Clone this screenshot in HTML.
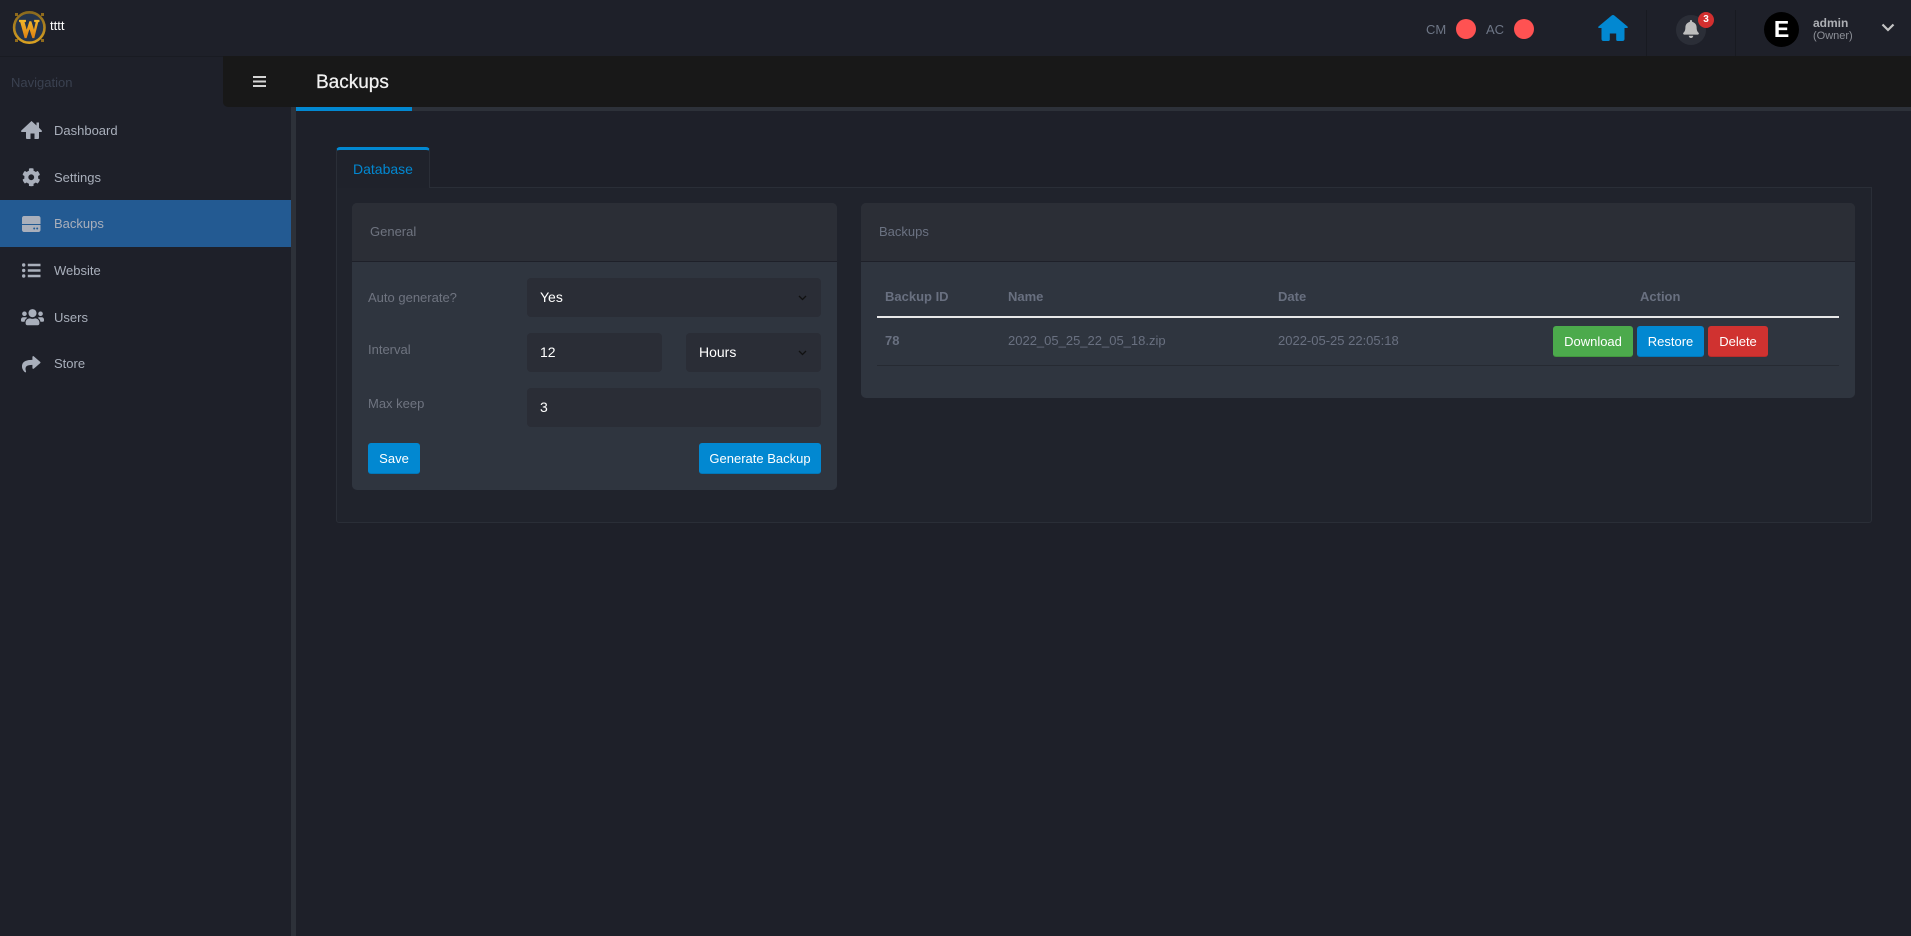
<!DOCTYPE html>
<html lang="en">
<head>
<meta charset="utf-8">
<title>Backups</title>
<style>
html,body{margin:0;padding:0;width:1911px;height:936px;overflow:hidden;background:#1e2029;font-family:"Liberation Sans",Arial,sans-serif;font-size:13px;}
.a{position:absolute;}
.t{position:absolute;white-space:nowrap;line-height:16px;height:16px;}
svg{position:absolute;display:block;}
.nav{color:#a9afbb;left:54px;}
.field{position:absolute;background:#2a2d36;border-radius:4px;height:39px;color:#fff;line-height:39px;font-size:14px;box-sizing:border-box;padding-left:13px;}
.btn{position:absolute;height:31px;line-height:31px;border-radius:3px;color:#fff;text-align:center;font-size:13px;box-sizing:border-box;}
.blue{background:#0288d1;border-bottom:1px solid #0277b8;}
.lab{color:#6f7480;}
.th{color:#697080;font-weight:bold;}
.td{color:#697080;}
</style>
</head>
<body>
<!-- top bar -->
<div class="a" style="left:0;top:0;width:1911px;height:56px;background:#1e2029;"></div>
<div class="a" style="left:0;top:56px;width:223px;height:1px;background:#191b22;"></div>
<!-- logo -->
<svg style="left:11px;top:10px" width="38" height="36" viewBox="0 0 38 36">
<defs>
<linearGradient id="g" x1="0" y1="0" x2="0" y2="1"><stop offset="0" stop-color="#8a6a1e"/><stop offset="1" stop-color="#d9a021"/></linearGradient>
<linearGradient id="w" x1="0" y1="0" x2="0" y2="1"><stop offset="0" stop-color="#f7c32e"/><stop offset="1" stop-color="#d9730d"/></linearGradient>
</defs>
<path d="M4 3h3v3H4zM30 3h3v3h-3zM4 29h3v3H4zM30 29h3v3h-3z" fill="#8f6a1c"/>
<circle cx="18.300" cy="17.500" r="15.200" fill="#24334a" stroke="url(#g)" stroke-width="2.600"/>
<text x="18.300" y="27" text-anchor="middle" font-family="Liberation Serif, serif" font-weight="bold" font-size="25" fill="url(#w)" stroke="url(#w)" stroke-width="1.300" textLength="20" lengthAdjust="spacingAndGlyphs">W</text>
</svg>
<div class="t" style="left:50px;top:18px;color:#fff;font-size:13px;">tttt</div>

<!-- status -->
<div class="t" style="left:1426px;top:22px;font-size:13px;color:#6e7686;">CM</div>
<div class="a" style="left:1456px;top:19px;width:20px;height:20px;border-radius:50%;background:#ff5252;"></div>
<div class="t" style="left:1486px;top:22px;font-size:13px;color:#6e7686;">AC</div>
<div class="a" style="left:1514px;top:19px;width:20px;height:20px;border-radius:50%;background:#ff5252;"></div>
<svg style="left:1598px;top:15px" width="30" height="26" viewBox="0 0 30 26"><path d="M15 0c.5 0 1 .2 1.500.6L29.500 11.500c.6.700.4 1.500-.5 1.500H26.500V24c0 1.200-.8 2-2 2h-5c-.8 0-1.300-.6-1.300-1.400V18.500h-6.400v6.100c0 .8-.5 1.400-1.300 1.400h-5c-1.200 0-2-.8-2-2V13H1c-.9 0-1.100-.8-.5-1.500L13.500 .6c.5-.4 1-.6 1.500-.6z" fill="#0288d1"/></svg>
<div class="a" style="left:1646px;top:10px;width:1px;height:46px;background:#181a21;"></div>
<div class="a" style="left:1735px;top:10px;width:1px;height:46px;background:#181a21;"></div>
<div class="a" style="left:1676px;top:15px;width:30px;height:30px;border-radius:50%;background:#2b2e37;"></div>
<svg style="left:1683px;top:20px" width="16" height="18" viewBox="0 0 448 512"><path fill="#bdbdbd" d="M224 512c35.32 0 63.970-28.650 63.970-64H160.030c0 35.350 28.650 64 63.970 64zm215.390-149.710c-19.320-20.760-55.470-51.990-55.470-154.290 0-77.700-54.480-139.900-127.940-155.160V32c0-17.670-14.320-32-31.980-32s-31.980 14.330-31.980 32v20.840C118.560 68.100 64.080 130.300 64.080 208c0 102.300-36.150 133.530-55.470 154.290-6 6.450-8.660 14.160-8.610 21.710.11 16.400 12.980 32 32.100 32h383.800c19.120 0 32-15.600 32.100-32 .05-7.550-2.610-15.270-8.610-21.710z"/></svg>
<div class="a" style="left:1698px;top:12px;width:16px;height:16px;border-radius:50%;background:#d32f2f;color:#fff;font-size:10px;font-weight:bold;line-height:15px;text-align:center;">3</div>
<div class="a" style="left:1764px;top:12px;width:35px;height:35px;border-radius:50%;background:#000;color:#fff;font-size:23px;font-weight:bold;line-height:35px;text-align:center;">E</div>
<div class="t" style="left:1813px;top:15px;color:#adafb4;font-size:12px;font-weight:bold;">admin</div>
<div class="t" style="left:1813px;top:28px;color:#8d9098;font-size:11px;">(Owner)</div>
<svg style="left:1881px;top:23px" width="14" height="9" viewBox="0 0 14 9"><path d="M1.500 1.500L7 7l5.500-5.500" fill="none" stroke="#c4c4c4" stroke-width="2.200"/></svg>

<!-- sidebar -->
<div class="t" style="left:11px;top:75px;color:#3a4150;font-size:13px;">Navigation</div>
<div class="a" style="left:0;top:200px;width:291px;height:47px;background:#235a92;"></div>

<svg style="left:21px;top:121px" width="21" height="18" viewBox="0 0 21 18"><path fill="#a9afbb" d="M10.500 0L15.500 4.500V1.500h2.500v5.300l2.700 2.700c.5.500.2 1.500-.5 1.500H18v6c0 .6-.4 1-1 1h-3.500v-5.500h-4V18H6c-.6 0-1-.4-1-1v-6H.800c-.7 0-1-.9-.5-1.500z"/></svg>
<div class="t nav" style="top:123px;">Dashboard</div>

<svg style="left:22px;top:168px" width="18.500" height="18.500" viewBox="0 0 512 512"><path fill="#a9afbb" d="M487.400 315.700l-42.600-24.600c4.300-23.200 4.300-47 0-70.200l42.600-24.600c4.900-2.800 7.100-8.600 5.500-14-11.100-35.600-30-67.800-54.700-94.600-3.800-4.100-10-5.100-14.800-2.300L380.800 110c-17.900-15.400-38.500-27.300-60.800-35.100V25.800c0-5.600-3.900-10.500-9.400-11.700-36.700-8.200-74.300-7.800-109.200 0-5.500 1.200-9.400 6.100-9.400 11.700V75c-22.200 7.900-42.800 19.800-60.800 35.100L88.700 85.500c-4.900-2.800-11-1.900-14.800 2.300-24.700 26.700-43.600 58.900-54.700 94.600-1.700 5.400.6 11.200 5.500 14L67.300 221c-4.300 23.200-4.300 47 0 70.200l-42.600 24.600c-4.900 2.800-7.100 8.600-5.500 14 11.100 35.600 30 67.800 54.700 94.600 3.800 4.100 10 5.100 14.800 2.300l42.600-24.600c17.900 15.400 38.500 27.300 60.800 35.100v49.200c0 5.600 3.900 10.500 9.400 11.700 36.700 8.200 74.300 7.800 109.200 0 5.500-1.200 9.400-6.100 9.400-11.700v-49.200c22.200-7.900 42.800-19.800 60.800-35.100l42.600 24.600c4.900 2.800 11 1.900 14.800-2.300 24.700-26.700 43.600-58.900 54.700-94.600 1.500-5.500-.7-11.300-5.600-14.100zM256 336c-44.100 0-80-35.900-80-80s35.900-80 80-80 80 35.900 80 80-35.900 80-80 80z"/></svg>
<div class="t nav" style="top:170px;">Settings</div>

<svg style="left:22px;top:216px" width="18.500" height="16" viewBox="0 0 18.500 16"><path fill="#a9afbb" d="M2 0h14.500c1.100 0 2 .9 2 2v6H0V2C0 .9.900 0 2 0zM0 9h18.500v5c0 1.100-.9 2-2 2H2c-1.100 0-2-.9-2-2zm11.200 3.500a1 1 0 1 0 2 0 1 1 0 0 0-2 0zm3 0a1 1 0 1 0 2 0 1 1 0 0 0-2 0z" fill-rule="evenodd"/></svg>
<div class="t nav" style="top:216px;">Backups</div>

<svg style="left:22px;top:263px" width="18.500" height="15" viewBox="0 0 18.500 15"><path fill="#a9afbb" d="M0 2a1.700 1.700 0 1 1 3.400 0A1.700 1.700 0 0 1 0 2zm0 5.500a1.700 1.700 0 1 1 3.400 0 1.700 1.700 0 0 1-3.400 0zM0 13a1.700 1.700 0 1 1 3.400 0A1.700 1.700 0 0 1 0 13zM5.800.8h12.700v2.400H5.800zm0 5.500h12.700v2.400H5.800zm0 5.500h12.700v2.400H5.800z"/></svg>
<div class="t nav" style="top:263px;">Website</div>

<svg style="left:21px;top:308px" width="23" height="18.400" viewBox="0 0 640 512"><path fill="#a9afbb" d="M96 224c35.300 0 64-28.700 64-64s-28.700-64-64-64-64 28.700-64 64 28.700 64 64 64zm448 0c35.300 0 64-28.700 64-64s-28.700-64-64-64-64 28.700-64 64 28.700 64 64 64zm32 32h-64c-17.600 0-33.500 7.100-45.100 18.600 40.300 22.100 68.900 62 75.100 109.400h66c17.700 0 32-14.300 32-32v-32c0-35.300-28.700-64-64-64zm-256 0c61.900 0 112-50.100 112-112S381.900 32 320 32 208 82.100 208 144s50.100 112 112 112zm76.800 32h-8.300c-20.800 10-43.900 16-68.500 16s-47.600-6-68.500-16h-8.300C179.600 288 128 339.600 128 403.200V432c0 26.500 21.500 48 48 48h288c26.500 0 48-21.500 48-48v-28.800c0-63.600-51.600-115.200-115.200-115.200zm-223.700-13.400C161.500 263.100 145.600 256 128 256H64c-35.300 0-64 28.700-64 64v32c0 17.700 14.300 32 32 32h65.900c6.300-47.400 34.900-87.300 75.200-109.400z"/></svg>
<div class="t nav" style="top:310px;">Users</div>

<svg style="left:22px;top:355px" width="18.500" height="18.500" viewBox="0 0 512 512"><path fill="#a9afbb" d="M503.691 189.836L327.687 37.851C312.281 24.546 288 35.347 288 56.015v80.053C127.371 137.907 0 170.100 0 322.326c0 61.441 39.581 122.309 83.333 154.132 13.653 9.931 33.111-2.533 28.077-18.631C66.066 312.814 132.917 274.316 288 272.085V360c0 20.700 24.300 31.453 39.687 18.164l176.004-152c11.071-9.562 11.086-26.753 0-36.328z"/></svg>
<div class="t nav" style="top:356px;">Store</div>

<!-- vertical divider + header -->
<div class="a" style="left:291px;top:107px;width:5px;height:829px;background:#2d3139;"></div>
<div class="a" style="left:223px;top:56px;width:1688px;height:51px;background:#181818;border-bottom-left-radius:5px;"></div>
<div class="a" style="left:296px;top:107px;width:1615px;height:4px;background:#2d3139;"></div>
<div class="a" style="left:296px;top:107px;width:116px;height:4px;background:#0288d1;"></div>
<svg style="left:253px;top:76px" width="13" height="11" viewBox="0 0 13 11"><path fill="#d4d4d4" d="M0 0h13v2H0zM0 4.500h13v2H0zM0 9h13v2H0z"/></svg>
<div class="t" style="left:316px;top:73px;color:#f2f2f2;font-size:19px;line-height:20px;height:20px;-webkit-text-stroke:.25px #f2f2f2;">Backups</div>

<!-- tab panel -->
<div class="a" style="left:336px;top:187px;width:1536px;height:336px;box-sizing:border-box;background:#20232c;border:1px solid #2a2e37;border-radius:0 0 3px 3px;"></div>
<div class="a" style="left:336px;top:147px;width:94px;height:41px;box-sizing:border-box;background:#1f222b;border:1px solid #2a2e37;border-top:3px solid #0288d1;border-bottom:none;border-radius:4px 4px 0 0;"></div>
<div class="t" style="left:353px;top:161px;color:#0288d1;font-size:14px;">Database</div>

<!-- General card -->
<div class="a" style="left:352px;top:203px;width:485px;height:287px;background:#2f353f;border-radius:5px;overflow:hidden;">
  <div class="a" style="left:0;top:0;width:485px;height:58px;background:#2b2e36;border-bottom:1px solid #1e2029;"></div>
</div>
<div class="t lab" style="left:370px;top:224px;">General</div>
<div class="t lab" style="left:368px;top:290px;">Auto generate?</div>
<div class="t lab" style="left:368px;top:342px;">Interval</div>
<div class="t lab" style="left:368px;top:396px;">Max keep</div>

<div class="field" style="left:527px;top:278px;width:294px;">Yes</div>
<svg style="left:798px;top:295px" width="9" height="6" viewBox="0 0 9 6"><path d="M1 1l3.500 3.500L8 1" fill="none" stroke="#111" stroke-width="1.300"/></svg>
<div class="field" style="left:527px;top:333px;width:135px;">12</div>
<div class="field" style="left:686px;top:333px;width:135px;">Hours</div>
<svg style="left:798px;top:350px" width="9" height="6" viewBox="0 0 9 6"><path d="M1 1l3.500 3.500L8 1" fill="none" stroke="#111" stroke-width="1.300"/></svg>
<div class="field" style="left:527px;top:388px;width:294px;">3</div>

<div class="btn blue" style="left:368px;top:443px;width:52px;">Save</div>
<div class="btn blue" style="left:699px;top:443px;width:122px;">Generate Backup</div>

<!-- Backups card -->
<div class="a" style="left:861px;top:203px;width:994px;height:195px;background:#2f353f;border-radius:5px;overflow:hidden;">
  <div class="a" style="left:0;top:0;width:994px;height:58px;background:#2b2e36;border-bottom:1px solid #1e2029;"></div>
</div>
<div class="t" style="left:879px;top:224px;color:#6b7282;">Backups</div>
<div class="t th" style="left:885px;top:289px;">Backup ID</div>
<div class="t th" style="left:1008px;top:289px;">Name</div>
<div class="t th" style="left:1278px;top:289px;">Date</div>
<div class="t th" style="left:1640px;top:289px;">Action</div>
<div class="a" style="left:877px;top:316px;width:962px;height:2px;background:#e8e8e8;"></div>
<div class="t th" style="left:885px;top:333px;">78</div>
<div class="t td" style="left:1008px;top:333px;">2022_05_25_22_05_18.zip</div>
<div class="t td" style="left:1278px;top:333px;">2022-05-25 22:05:18</div>
<div class="btn" style="left:1553px;top:326px;width:80px;background:#4caa4c;border-bottom:1px solid #43963f;">Download</div>
<div class="btn blue" style="left:1637px;top:326px;width:67px;">Restore</div>
<div class="btn" style="left:1708px;top:326px;width:60px;background:#d03230;border-bottom:1px solid #b72c2a;">Delete</div>
<div class="a" style="left:877px;top:365px;width:962px;height:1px;background:#262a32;"></div>
</body>
</html>
